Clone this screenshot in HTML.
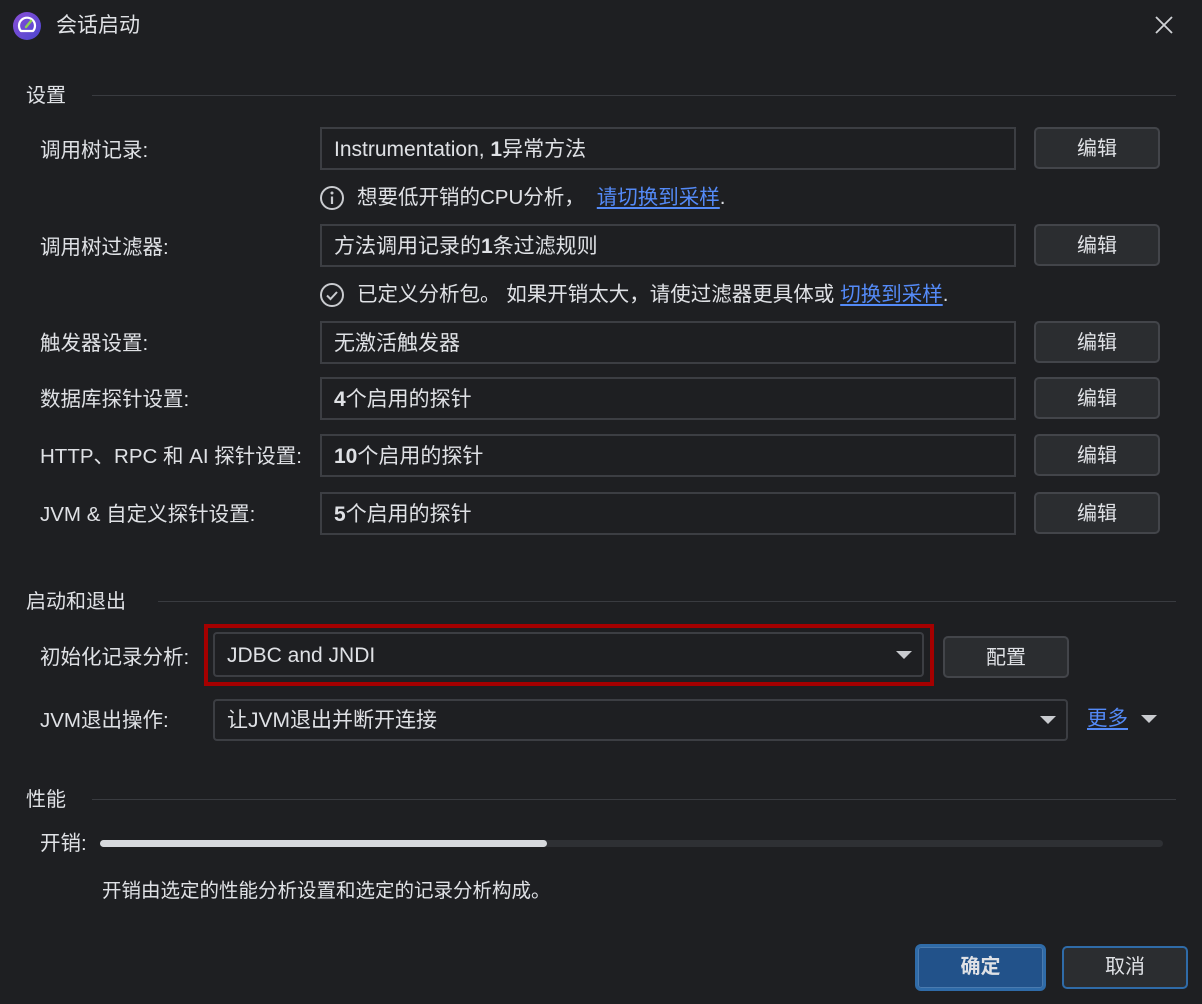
<!DOCTYPE html>
<html><head><meta charset="utf-8"><style>
*{box-sizing:border-box;margin:0;padding:0}
body{width:1202px;height:1004px;background:#1e1f22;font-family:"Liberation Sans","Noto Sans CJK SC",sans-serif;color:#dfe1e5;position:relative;overflow:hidden;font-size:21px}
.a{position:absolute;white-space:nowrap}
.lbl{left:40px;line-height:26px;font-size:20.5px}
.f{position:absolute;left:320px;width:696px;height:43px;border:2px solid #3c3e43;background:#1e1f22;padding-left:12px;line-height:41px;font-size:21px}
.b{position:absolute;left:1034px;width:126px;height:42px;border:2px solid #43454a;border-radius:5px;background:#2b2d30;text-align:center;line-height:40px;font-size:20px}
.sec{position:absolute;left:26px;font-size:20px;line-height:26px}
.ln{position:absolute;height:1px;background:#393b40;right:26px}
.note{position:absolute;left:319px;font-size:20.5px;line-height:26px;display:flex;align-items:center}
.note svg{margin-right:12px}
.lk{color:#548af7;text-decoration:underline;text-underline-offset:3px}
.tri{position:absolute;width:0;height:0;border-left:8px solid transparent;border-right:8px solid transparent;border-top:8px solid #c9cbcf}
</style></head><body>
<svg class="a" style="left:13px;top:12px" width="28" height="28" viewBox="0 0 28 28"><defs><linearGradient id="g" x1="0" y1="0" x2="1" y2="1"><stop offset="0" stop-color="#8b4fd6"/><stop offset="1" stop-color="#4a45d1"/></linearGradient></defs><circle cx="14" cy="14" r="14" fill="url(#g)"/><path d="M8 19 A8 8 0 1 1 20 19 Z" fill="none" stroke="#fff" stroke-width="2.2" stroke-linejoin="round"/><path d="M13 15 L18 9" stroke="#8fd14f" stroke-width="2.5" stroke-linecap="round"/></svg>
<div class="a" style="left:56px;top:13px;font-size:21px;line-height:26px">会话启动</div>
<svg class="a" style="left:1154px;top:15px" width="20" height="20" viewBox="0 0 20 20"><path d="M2 2L18 18M18 2L2 18" stroke="#d0d2d6" stroke-width="1.8"/></svg>

<div class="sec" style="top:83px">设置</div><div class="ln" style="left:92px;top:95px"></div>
<div class="a lbl" style="top:138px">调用树记录:</div>
<div class="f" style="top:127px">Instrumentation, <b>1</b>异常方法</div><div class="b" style="top:127px">编辑</div>
<div class="note" style="top:185px"><svg width="26" height="26" viewBox="0 0 26 26"><circle cx="13" cy="13" r="11" fill="none" stroke="#c9cbcf" stroke-width="2"/><circle cx="13" cy="8" r="1.5" fill="#c9cbcf"/><path d="M13 11.5V19" stroke="#c9cbcf" stroke-width="2.2"/></svg>想要低开销的CPU分析， <span class="lk" style="margin-left:12px">请切换到采样</span>.</div>
<div class="a lbl" style="top:235px">调用树过滤器:</div>
<div class="f" style="top:224px">方法调用记录的<b>1</b>条过滤规则</div><div class="b" style="top:224px">编辑</div>
<div class="note" style="top:282px"><svg width="26" height="26" viewBox="0 0 26 26"><circle cx="13" cy="13" r="11" fill="none" stroke="#c9cbcf" stroke-width="2"/><path d="M8 13.5l3.5 3.5 6.5-7" fill="none" stroke="#c9cbcf" stroke-width="2"/></svg>已定义分析包。 如果开销太大，请使过滤器更具体或 <span class="lk" style="margin-left:6px">切换到采样</span>.</div>
<div class="a lbl" style="top:331px">触发器设置:</div>
<div class="f" style="top:321px">无激活触发器</div><div class="b" style="top:321px">编辑</div>
<div class="a lbl" style="top:387px">数据库探针设置:</div>
<div class="f" style="top:377px"><b>4</b>个启用的探针</div><div class="b" style="top:377px">编辑</div>
<div class="a lbl" style="top:444px">HTTP、RPC 和 AI 探针设置:</div>
<div class="f" style="top:434px"><b>10</b>个启用的探针</div><div class="b" style="top:434px">编辑</div>
<div class="a lbl" style="top:502px">JVM &amp; 自定义探针设置:</div>
<div class="f" style="top:492px"><b>5</b>个启用的探针</div><div class="b" style="top:492px">编辑</div>

<div class="sec" style="top:589px">启动和退出</div><div class="ln" style="left:158px;top:601px"></div>
<div class="a lbl" style="top:645px">初始化记录分析:</div>
<div class="a" style="left:204px;top:624px;width:730px;height:62px;border:4px solid #a50000"></div>
<div class="f" style="left:213px;top:632px;width:711px;height:45px;border-radius:4px;line-height:43px">JDBC and JNDI</div>
<div class="tri" style="left:896px;top:651px"></div>
<div class="b" style="left:943px;top:636px;width:126px">配置</div>
<div class="a lbl" style="top:708px">JVM退出操作:</div>
<div class="f" style="left:213px;top:699px;width:855px;height:42px;border-radius:4px;line-height:40px">让JVM退出并断开连接</div>
<div class="tri" style="left:1040px;top:716px"></div>
<div class="a lk" style="left:1087px;top:706px;line-height:26px;font-size:20.5px">更多</div>
<div class="tri" style="left:1141px;top:715px"></div>

<div class="sec" style="top:787px">性能</div><div class="ln" style="left:92px;top:799px"></div>
<div class="a lbl" style="top:831px">开销:</div>
<div class="a" style="left:100px;top:840px;width:1063px;height:7px;background:#2e3034;border-radius:4px"></div>
<div class="a" style="left:100px;top:840px;width:447px;height:7px;background:#d7d9dd;border-radius:4px"></div>
<div class="a" style="left:102px;top:878px;font-size:19.5px;line-height:26px">开销由选定的性能分析设置和选定的记录分析构成。</div>

<div class="a" style="left:915px;top:944px;width:131px;height:47px;border:3px solid #2f6ba8;border-radius:6px;background:#22528a;box-shadow:inset 0 0 0 1px #4a7bb0;text-align:center;line-height:41px;font-weight:bold;font-size:20px">确定</div>
<div class="a" style="left:1062px;top:946px;width:126px;height:43px;border:2px solid #2f6ba8;border-radius:5px;background:#2b2d30;text-align:center;line-height:39px;font-size:20px">取消</div>
</body></html>
